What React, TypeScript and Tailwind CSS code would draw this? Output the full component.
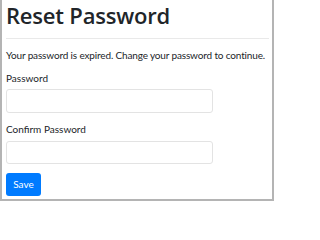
export default function App() {
  return (
    <div className="w-[274px] h-[202px] bg-white overflow-hidden">
      <div className="w-[274px] h-[201px] border-l-2 border-r-2 border-b-2 border-[#b4b4b4] pl-[4px] pr-[1px] text-[#212529] font-['Lato','Open_Sans',sans-serif]">
        <h2 className="pt-[2px] text-[22px] leading-[26px] font-semibold font-['Open_Sans',sans-serif] tracking-[-0.2px]">
          Reset Password
        </h2>
        <div className="mt-[10px] mr-[2px] h-px bg-[#e9e9e9]" />
        <p className="mt-[9px] text-[10px] leading-[15px] tracking-[-0.15px] whitespace-nowrap">
          Your password is expired. Change your password to continue.
        </p>
        <div className="mt-[8px] flex flex-col">
          <label className="text-[10px] leading-[15px]">Password</label>
          <input
            type="password"
            className="mt-[3px] w-[207px] h-[24px] rounded-[3px] border border-[#e3e3e3] px-2 text-[10px] outline-none"
          />
        </div>
        <div className="mt-[9px] flex flex-col">
          <label className="text-[10px] leading-[15px]">Confirm Password</label>
          <input
            type="password"
            className="mt-[4px] w-[207px] h-[23px] rounded-[3px] border border-[#e3e3e3] px-2 text-[10px] outline-none"
          />
        </div>
        <button className="mt-[9px] w-[35px] h-[23px] rounded-[3px] bg-[#007bff] text-white text-[10px] leading-[15px]">
          Save
        </button>
      </div>
    </div>
  );
}
